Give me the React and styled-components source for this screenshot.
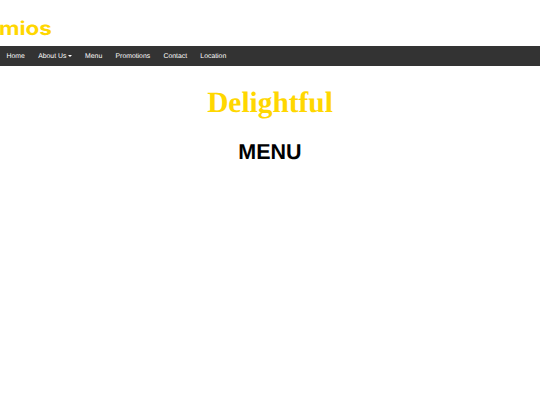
import React from 'react'
import styled, { createGlobalStyle } from 'styled-components'

const GlobalStyle = createGlobalStyle`
  html, body {
    margin: 0;
    padding: 0;
    background: #fff;
    font-family: "Liberation Sans", Arial, sans-serif;
    text-rendering: geometricPrecision;
  }
`

const Page = styled.div`
  width: 540px;
  height: 405px;
  overflow: hidden;
`

const Header = styled.header`
  height: 46px;
  display: flex;
  align-items: flex-start;
  overflow: hidden;
`

const Logo = styled.div`
  margin: 16px 0 0 -1px;
  font-family: "Inter", sans-serif;
  font-size: 19px;
  line-height: 26px;
  font-weight: 700;
  color: #ffd700;
  transform-origin: left center;
  transform: scaleX(1.18);
`

const Nav = styled.nav`
  height: 20px;
  background: #333;
  display: flex;
  align-items: center;
  padding-left: 6.6px;
  gap: 13.3px;
`

const NavLink = styled.a`
  font-size: 6.85px;
  color: #fff;
  white-space: nowrap;
  display: flex;
  align-items: center;
  gap: 1.5px;
`

const Caret = styled.span`
  width: 0;
  height: 0;
  border-left: 2.5px solid transparent;
  border-right: 2.5px solid transparent;
  border-top: 2.5px solid #fff;
`

const Title = styled.h1`
  margin: 20px 0 0;
  text-align: center;
  font-family: "Liberation Serif", "Times New Roman", serif;
  font-size: 29.4px;
  line-height: 34px;
  font-weight: 700;
  color: #ffd700;
`

const Subtitle = styled.h2`
  margin: 18.5px 0 0;
  text-align: center;
  font-size: 21.5px;
  line-height: 26px;
  font-weight: 700;
  color: #000;
`

const links = ['Home', 'About Us', 'Menu', 'Promotions', 'Contact', 'Location']

const App = () => {
  return (
    <Page>
      <GlobalStyle />
      <Header>
        <Logo>mios</Logo>
      </Header>
      <Nav>
        {links.map((link) => (
          <NavLink key={link}>
            {link}
            {link === 'About Us' && <Caret />}
          </NavLink>
        ))}
      </Nav>
      <Title>Delightful</Title>
      <Subtitle>MENU</Subtitle>
    </Page>
  )
}

export default App
